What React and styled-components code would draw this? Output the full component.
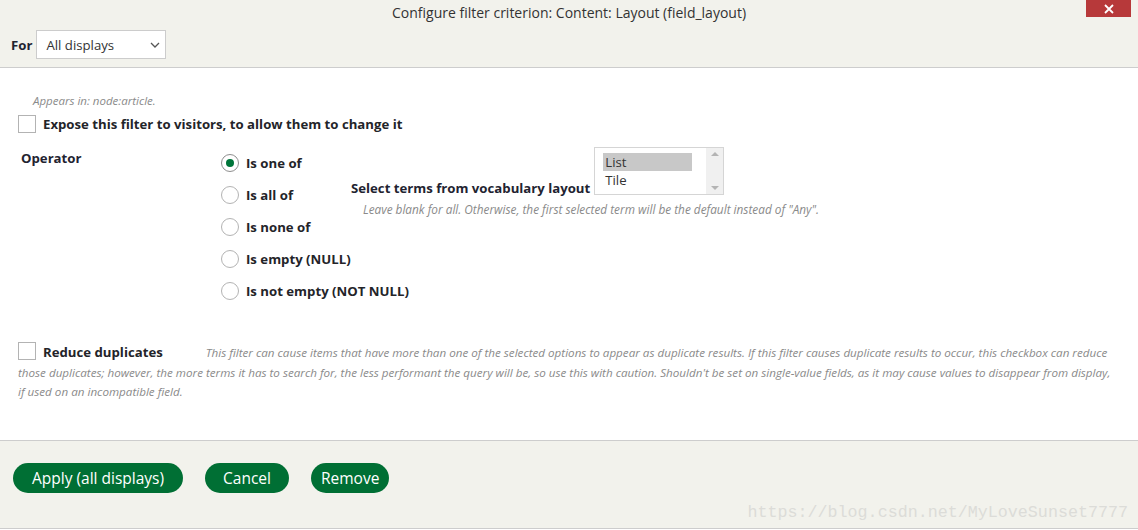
import React from "react";
import styled, { createGlobalStyle } from "styled-components";

const GlobalStyle = createGlobalStyle`
  html, body {
    margin: 0;
    padding: 0;
    background: #fff;
  }
  body {
    font-family: "Open Sans", "Liberation Sans", sans-serif;
    color: #222330;
  }
`;

const Dialog = styled.div`
  width: 1138px;
  height: 530px;
  display: flex;
  flex-direction: column;
  overflow: hidden;
`;

const Header = styled.header`
  height: 68px;
  box-sizing: border-box;
  background: #f2f2ec;
  border-bottom: 1px solid #cdcdcd;
  display: flex;
  flex-direction: column;
`;

const TitleBar = styled.div`
  display: grid;
  grid-template-columns: 1fr auto 1fr;
  height: 27px;
`;

const Title = styled.h1`
  grid-column: 2;
  margin: 0;
  font-size: 14px;
  font-weight: 400;
  line-height: 26px;
  color: #333;
`;

const CloseButton = styled.button`
  grid-column: 3;
  justify-self: end;
  width: 45px;
  height: 17px;
  margin-right: 7px;
  border: 0;
  padding: 0;
  background: #b7393a;
  display: flex;
  align-items: center;
  justify-content: center;
`;

const ForRow = styled.div`
  display: flex;
  align-items: center;
  gap: 4px;
  padding: 3px 0 0 11px;
`;

const ForLabel = styled.label`
  font-weight: 700;
  font-size: 13.2px;
`;

const FakeSelect = styled.div`
  width: 130px;
  height: 29px;
  box-sizing: border-box;
  border: 1px solid #ccc;
  background: #fff;
  display: flex;
  align-items: center;
  justify-content: space-between;
  padding: 1px 5px 0 9px;
  font-size: 13.2px;
  color: #333;
`;

const Body = styled.main`
  flex: 1;
  padding: 25px 0 0 18px;
`;

const Note = styled.div`
  font-size: 11.5px;
  font-style: italic;
  color: #8a8a8a;
  padding-left: 15px;
  line-height: 15px;
`;

const CheckRow = styled.div`
  display: flex;
  align-items: center;
  gap: 7px;
  margin-top: 7px;
`;

const Box = styled.span`
  width: 18px;
  height: 18px;
  box-sizing: border-box;
  border: 1px solid #b3b3b3;
  background: #fff;
  flex-shrink: 0;
  display: inline-block;
`;

const StrongLabel = styled.span`
  font-weight: 700;
  font-size: 13.2px;
  color: #232429;
`;

const OperatorRow = styled.div`
  display: flex;
  margin-top: 16px;
`;

const OperatorLabel = styled.div`
  width: 203px;
  flex-shrink: 0;
  padding-left: 3px;
  box-sizing: border-box;
  font-weight: 700;
  font-size: 13.2px;
  line-height: 18px;
`;

const RadioList = styled.div`
  width: 130px;
  flex-shrink: 0;
  display: flex;
  flex-direction: column;
  gap: 14px;
  padding-top: 5px;
`;

const RadioItem = styled.div`
  display: flex;
  align-items: center;
  gap: 7px;
  white-space: nowrap;
  height: 18px;
`;

const Radio = styled.span`
  width: 18px;
  height: 18px;
  flex-shrink: 0;
  box-sizing: border-box;
  border-radius: 50%;
  border: 1px solid ${(p) => (p.checked ? "#8e8e8e" : "#b3b3b3")};
  background: #fff;
  display: flex;
  align-items: center;
  justify-content: center;
  &::after {
    content: "";
    width: 8px;
    height: 8px;
    border-radius: 50%;
    background: ${(p) => (p.checked ? "#00753a" : "transparent")};
  }
`;

const Terms = styled.div`
  display: flex;
  flex-direction: column;
  margin-top: -2px;
`;

const TermsTop = styled.div`
  display: flex;
  align-items: flex-end;
  gap: 4px;
`;

const TermsLabel = styled.span`
  font-weight: 700;
  font-size: 13.2px;
  line-height: 17px;
  margin-bottom: -2px;
`;

const ListBox = styled.div`
  width: 130px;
  height: 48px;
  box-sizing: border-box;
  border: 1px solid #d5d5d5;
  background: #fff;
  display: flex;
`;

const Options = styled.div`
  flex: 1;
  padding: 5px 0 0 8px;
`;

const Option = styled.div`
  width: 87px;
  height: 18px;
  line-height: 18px;
  padding-left: 2px;
  font-size: 13.2px;
  color: #333;
  background: ${(p) => (p.selected ? "#c8c8c8" : "transparent")};
`;

const ScrollTrack = styled.div`
  width: 17px;
  background: #f0f0f0;
  display: flex;
  flex-direction: column;
  justify-content: space-between;
  align-items: center;
  padding: 4px 0;
`;

const Arrow = styled.span`
  width: 0;
  height: 0;
  border-left: 4px solid transparent;
  border-right: 4px solid transparent;
  ${(p) => (p.up ? "border-bottom" : "border-top")}: 4px solid #b4b4b4;
`;

const TermsHint = styled.div`
  margin: 6px 0 0 12px;
  font-size: 11.8px;
  font-style: italic;
  color: #8a8a8a;
`;

const Dupes = styled.div`
  margin: 42px 24px 0 0;
  font-size: 11.65px;
  line-height: 19.5px;
  color: #8a8a8a;
`;

const InlineBox = styled(Box)`
  vertical-align: -3px;
  margin-right: 7px;
`;

const DupesLabel = styled(StrongLabel)`
  margin-right: 43px;
`;

const DupesText = styled.em``;

const Footer = styled.footer`
  height: 89px;
  flex-shrink: 0;
  background: #f2f2ec;
  border-top: 1px solid #cdcdcd;
  border-bottom: 1px solid #cdcdcd;
  display: flex;
  align-items: flex-start;
  gap: 22px;
  padding: 22px 0 0 13px;
  box-sizing: border-box;
  position: relative;
  margin-bottom: 1px;
`;

const Button = styled.button`
  height: 30px;
  border: 0;
  border-radius: 15px;
  background: #006f34;
  color: #fff;
  font-family: "Open Sans", "Liberation Sans", sans-serif;
  font-size: 15.5px;
  padding: 0 ${(p) => p.pad || 19}px;
`;

const Watermark = styled.span`
  position: absolute;
  right: 10px;
  bottom: 6px;
  font-family: "Liberation Mono", monospace;
  font-size: 16.7px;
  color: #dcdcd8;
`;

const radios = [
  "Is one of",
  "Is all of",
  "Is none of",
  "Is empty (NULL)",
  "Is not empty (NOT NULL)",
];

export default function App() {
  return (
    <Dialog>
      <GlobalStyle />
      <Header>
        <TitleBar>
          <Title>Configure filter criterion: Content: Layout (field_layout)</Title>
          <CloseButton aria-label="Close">
            <svg width="10" height="10" viewBox="0 0 10 10">
              <path d="M1 1L9 9M9 1L1 9" stroke="#fff" strokeWidth="1.8" />
            </svg>
          </CloseButton>
        </TitleBar>
        <ForRow>
          <ForLabel>For</ForLabel>
          <FakeSelect>
            All displays
            <svg width="10" height="6" viewBox="0 0 10 6">
              <path d="M1 1L5 5L9 1" stroke="#555" strokeWidth="1.3" fill="none" />
            </svg>
          </FakeSelect>
        </ForRow>
      </Header>

      <Body>
        <Note>Appears in: node:article.</Note>
        <CheckRow>
          <Box />
          <StrongLabel>Expose this filter to visitors, to allow them to change it</StrongLabel>
        </CheckRow>

        <OperatorRow>
          <OperatorLabel>Operator</OperatorLabel>
          <RadioList>
            {radios.map((r, i) => (
              <RadioItem key={r}>
                <Radio checked={i === 0} />
                <StrongLabel>{r}</StrongLabel>
              </RadioItem>
            ))}
          </RadioList>
          <Terms>
            <TermsTop>
              <TermsLabel>Select terms from vocabulary layout</TermsLabel>
              <ListBox>
                <Options>
                  <Option selected>List</Option>
                  <Option>Tile</Option>
                </Options>
                <ScrollTrack>
                  <Arrow up />
                  <Arrow />
                </ScrollTrack>
              </ListBox>
            </TermsTop>
            <TermsHint>
              Leave blank for all. Otherwise, the first selected term will be the default instead of "Any".
            </TermsHint>
          </Terms>
        </OperatorRow>

        <Dupes>
          <InlineBox />
          <DupesLabel>Reduce duplicates</DupesLabel>
          <DupesText>
            This filter can cause items that have more than one of the selected options to appear as
            duplicate results. If this filter causes duplicate results to occur, this checkbox can
            reduce those duplicates; however, the more terms it has to search for, the less performant
            the query will be, so use this with caution. Shouldn't be set on single-value fields, as it
            may cause values to disappear from display, if used on an incompatible field.
          </DupesText>
        </Dupes>
      </Body>

      <Footer>
        <Button>Apply (all displays)</Button>
        <Button pad={18}>Cancel</Button>
        <Button pad={10}>Remove</Button>
        <Watermark>https://blog.csdn.net/MyLoveSunset7777</Watermark>
      </Footer>
    </Dialog>
  );
}
